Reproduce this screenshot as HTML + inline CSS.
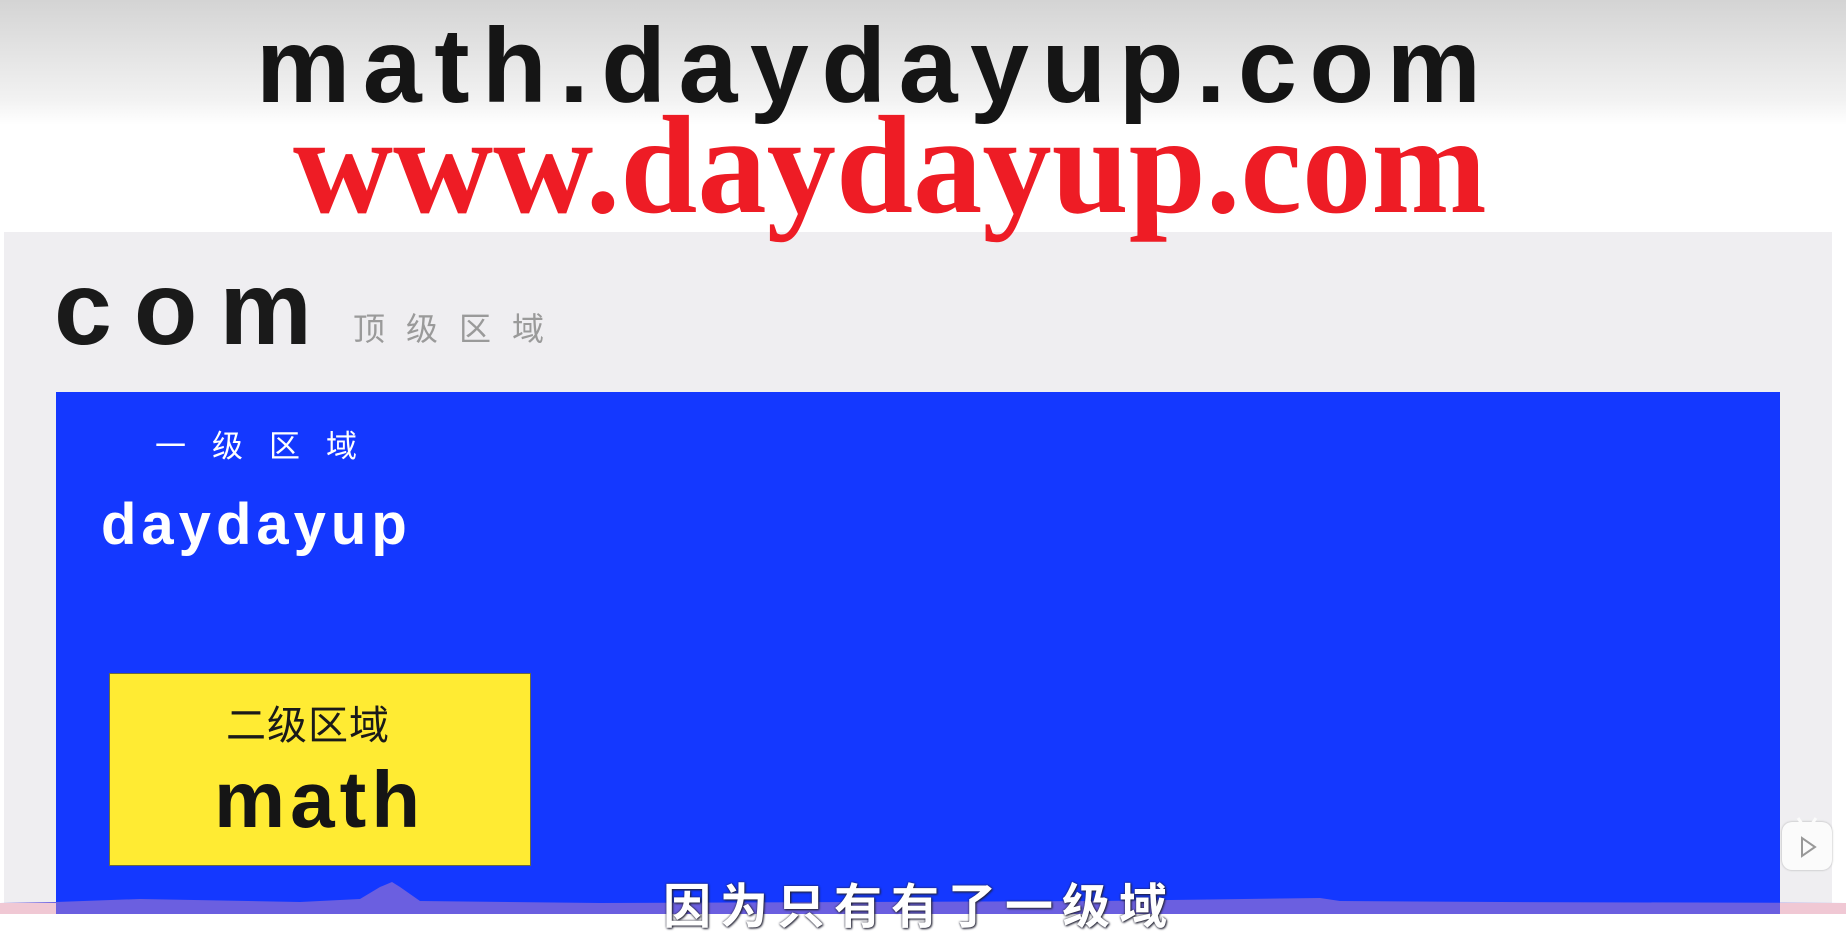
<!DOCTYPE html>
<html><head><meta charset="utf-8"><style>
body{margin:0;width:1846px;height:914px;overflow:hidden;position:relative;background:#fff;font-family:"Liberation Sans","Noto Sans CJK SC",sans-serif}
.a{position:absolute;white-space:nowrap}
</style></head><body>
<div class="a" style="left:0;top:0;width:1846px;height:125px;background:linear-gradient(#d4d4d4,#f2f2f2 80%,#fff)"></div>
<div class="a" style="left:4px;top:232px;width:1828px;height:682px;background:#efeef1"></div>
<div class="a" style="left:256px;top:6px;font-size:106px;line-height:120px;font-weight:bold;color:#151515;letter-spacing:12.5px">math.daydayup.com</div>
<div class="a" style="left:293px;top:86px;font-family:'Liberation Serif',serif;font-size:140px;line-height:160px;font-weight:bold;color:#ee1c25;transform:scaleX(0.99);transform-origin:left">www.daydayup.com</div>
<div class="a" style="left:54px;top:249px;font-size:104px;line-height:120px;font-weight:bold;color:#1a1a1a;letter-spacing:22px">com</div>
<div class="a" style="left:353px;top:309px;font-size:32px;line-height:40px;color:#9a9a9a;letter-spacing:21px">顶级区域</div>
<div class="a" style="left:56px;top:392px;width:1724px;height:522px;background:#1438ff"></div>
<div class="a" style="left:155px;top:427px;font-size:31px;line-height:40px;color:#fff;letter-spacing:26px">一级区域</div>
<div class="a" style="left:101px;top:490px;font-size:58px;line-height:70px;font-weight:bold;color:#fff;letter-spacing:5px">daydayup</div>
<div class="a" style="left:109px;top:673px;width:420px;height:191px;background:#ffeb33;border:1px solid #6a6a40"></div>
<div class="a" style="left:226px;top:702px;font-size:40px;line-height:48px;color:#1a1a1a;letter-spacing:1px">二级区域</div>
<div class="a" style="left:214px;top:755px;font-size:80px;line-height:90px;font-weight:bold;color:#151515;letter-spacing:5px">math</div>
<svg class="a" style="left:0;top:870px" width="1846" height="44"><path d="M0 33 L56 32 L140 29 L300 32 L360 29 L380 17 L392 12 L400 17 L420 31 L600 33 L1100 31 L1320 28 L1340 31 L1500 32 L1846 33 L1846 44 L0 44Z" fill="#6b5fe0"/><rect x="0" y="33" width="56" height="11" fill="#f0c8d4"/><rect x="1780" y="33" width="66" height="11" fill="#f0c8d4"/></svg>
<div class="a" style="left:663px;top:880px;font-size:48px;line-height:56px;font-weight:bold;color:#fff;letter-spacing:9px;text-shadow:0 0 2px #223,1px 1px 2px #223">因为只有有了一级域</div>
<div class="a" style="left:1782px;top:822px;width:50px;height:48px;background:#fbfbfb;border-radius:10px;box-shadow:0 0 2px #aaa"></div>
<svg class="a" style="left:1782px;top:812px" width="50" height="60"><path d="M16 6 L20 12 M34 6 L30 12" stroke="#fbfbfb" stroke-width="3"/><path d="M20 26 L20 44 L33 35Z" fill="none" stroke="#999" stroke-width="2"/></svg>
</body></html>
